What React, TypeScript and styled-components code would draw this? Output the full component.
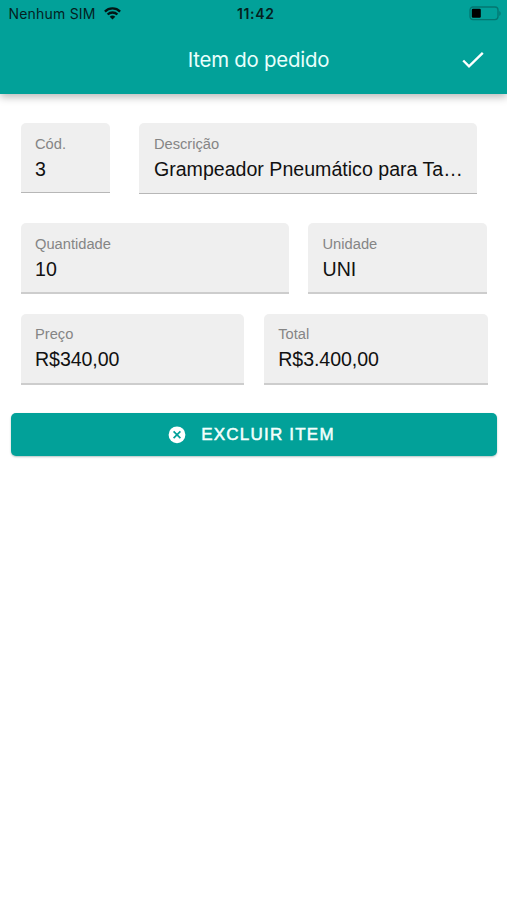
import React from "react";
import styled, { createGlobalStyle } from "styled-components";

const GlobalStyle = createGlobalStyle`
  * { box-sizing: border-box; }
  body { margin: 0; background: #fff; }
`;

const Screen = styled.div`
  min-height: 900px;
  background: #fff;
  font-family: "Liberation Sans", Arial, sans-serif;
  color: #111;
  overflow: hidden;
`;

const Header = styled.header`
  height: 94px;
  background: #02a199;
  box-shadow: 0 3px 8px rgba(0, 0, 0, 0.28);
  font-family: Inter, sans-serif;
`;

const StatusBar = styled.div`
  height: 27px;
  padding: 0 6px 0 8.5px;
  display: grid;
  grid-template-columns: 1fr auto 1fr;
  align-items: center;
  color: #04211f;
`;

const Carrier = styled.div`
  display: flex;
  align-items: center;
  gap: 8px;
  font-size: 14px;
  line-height: 27px;
  letter-spacing: 0.2px;
`;

const Clock = styled.div`
  font-size: 14px;
  font-weight: 600;
  line-height: 27px;
  letter-spacing: 0.65px;
  padding-left: 2px;
`;

const BatterySlot = styled.div`
  display: flex;
  justify-content: flex-end;
`;

const Toolbar = styled.div`
  height: 66px;
  display: grid;
  grid-template-columns: 60px 1fr 60px;
  align-items: center;
  padding: 0 4px 0 14px;
  color: #e9fffc;
`;

const Title = styled.h1`
  margin: 0;
  grid-column: 2;
  text-align: center;
  font-size: 20.4px;
  font-weight: 400;
  line-height: 30px;
  letter-spacing: -0.22px;
`;

const ConfirmButton = styled.button`
  border: 0;
  padding: 0;
  background: none;
  color: #fff;
  display: flex;
  justify-content: center;
`;

const Form = styled.main`
  padding: 29px 10px 0 10.5px;
`;

const Row = styled.div<{ $columns: string; $gap: number; $bottom: number }>`
  display: grid;
  grid-template-columns: ${(p) => p.$columns};
  column-gap: ${(p) => p.$gap}px;
  align-items: start;
  margin: 0 9.5px ${(p) => p.$bottom}px 10px;
`;

const FieldBox = styled.div<{ $height: number; $soft?: boolean; $top: number }>`
  min-width: 0;
  height: ${(p) => p.$height}px;
  padding: ${(p) => p.$top}px 14px 0 14.5px;
  background: #efefef;
  border-radius: 5px 5px 0 0;
  border-bottom: ${(p) => (p.$soft ? "2px solid #cdcdcd" : "1.5px solid #b7b7b7")};
`;

const Label = styled.div`
  color: #858585;
  font-size: 14.7px;
  line-height: 20px;
`;

const Value = styled.div<{ $spacing?: number }>`
  margin-top: 2px;
  font-size: 19.6px;
  line-height: 26px;
  letter-spacing: ${(p) => p.$spacing ?? 0}px;
  white-space: nowrap;
`;

const DeleteButton = styled.button`
  width: 100%;
  height: 43px;
  border: 0;
  border-radius: 5px;
  display: flex;
  align-items: center;
  justify-content: center;
  gap: 15.5px;
  padding: 0 5px 0 0;
  background: #02a199;
  color: #f4fffd;
  box-shadow: 0 1px 2px rgba(0, 60, 56, 0.3);
  font-family: inherit;
  font-size: 17px;
  line-height: 24px;
  letter-spacing: 1.22px;
  -webkit-text-stroke: 0.5px currentColor;
`;

interface FieldProps {
  label: string;
  value: string;
  height?: number;
  soft?: boolean;
  spacing?: number;
  top?: number;
}

const Field = ({ label, value, height = 71, soft, spacing, top = 11 }: FieldProps) => (
  <FieldBox $height={height} $soft={soft} $top={top}>
    <Label>{label}</Label>
    <Value $spacing={spacing}>{value}</Value>
  </FieldBox>
);

const WifiIcon = () => (
  <svg width="17" height="13" viewBox="0 0 17 13" fill="none" stroke="#031514" strokeWidth="2.3">
    <path d="M.9 4.6a10.8 10.8 0 0 1 15.2 0" />
    <path d="M3.6 7.5a7 7 0 0 1 9.8 0" />
    <path d="M8.5 12.6 5.7 9.8a4 4 0 0 1 5.6 0Z" fill="#031514" stroke="none" />
  </svg>
);

const BatteryIcon = () => (
  <svg width="32" height="15" viewBox="0 0 32 15">
    <rect x="1" y="1" width="28" height="12.6" rx="3" fill="none" stroke="#047670" strokeWidth="1.3" />
    <rect x="2.8" y="2.8" width="9" height="9" rx="1.2" fill="#000" />
    <path d="M30.3 5v5c1.8-.8 1.8-4.2 0-5Z" fill="#047670" />
  </svg>
);

const CheckIcon = () => (
  <svg width="24" height="20" viewBox="0 0 24 20" fill="none" stroke="currentColor" strokeWidth="2.4">
    <path d="m2.2 10.5 5.8 5.8L21.8 2.8" />
  </svg>
);

const CloseCircleIcon = () => (
  <svg width="18" height="18" viewBox="0 0 18 18">
    <circle cx="9" cy="8.8" r="8.4" fill="#fff" />
    <path d="m5.6 5.4 6.8 6.8m0-6.8-6.8 6.8" stroke="#02a199" strokeWidth="1.7" />
  </svg>
);

export default function App() {
  return (
    <Screen>
      <GlobalStyle />
      <Header>
        <StatusBar>
          <Carrier>
            <span>Nenhum SIM</span>
            <WifiIcon />
          </Carrier>
          <Clock>11:42</Clock>
          <BatterySlot>
            <BatteryIcon />
          </BatterySlot>
        </StatusBar>
        <Toolbar>
          <Title>Item do pedido</Title>
          <ConfirmButton aria-label="Confirmar">
            <CheckIcon />
          </ConfirmButton>
        </Toolbar>
      </Header>
      <Form>
        <Row $columns="89.4px 338px" $gap={29.5} $bottom={29}>
          <Field label="Cód." value="3" height={69.5} />
          <Field label="Descrição" value="Grampeador Pneumático para Ta…" />
        </Row>
        <Row $columns="268.5px 179px" $gap={19} $bottom={20}>
          <Field label="Quantidade" value="10" soft />
          <Field label="Unidade" value="UNI" soft />
        </Row>
        <Row $columns="1fr 1fr" $gap={19.5} $bottom={28}>
          <Field label="Preço" value="R$340,00" soft spacing={-0.08} top={10} />
          <Field label="Total" value="R$3.400,00" soft spacing={-0.08} top={10} />
        </Row>
        <DeleteButton>
          <CloseCircleIcon />
          <span>EXCLUIR ITEM</span>
        </DeleteButton>
      </Form>
    </Screen>
  );
}
